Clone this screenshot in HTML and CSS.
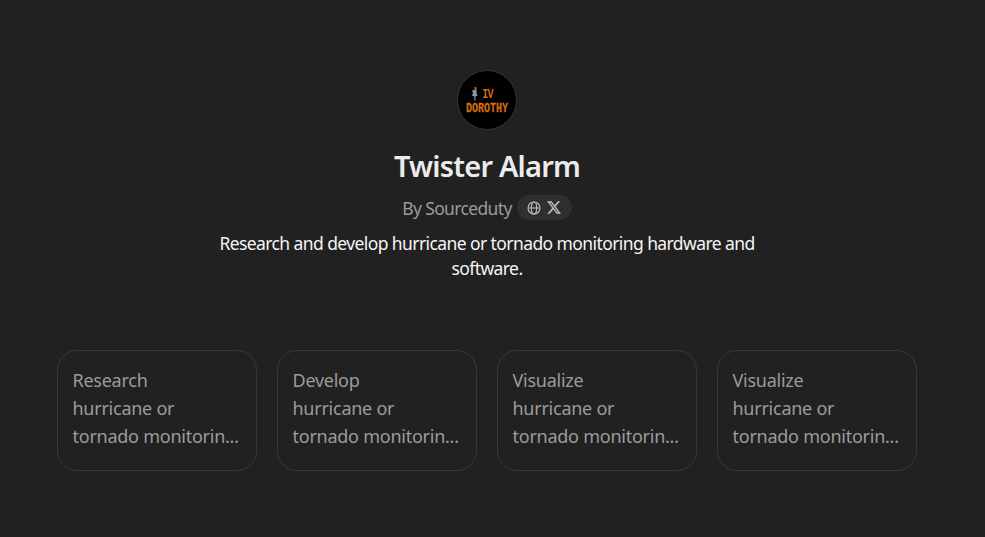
FILE: index.html
```html
<!DOCTYPE html>
<html lang="en">
<head>
<meta charset="utf-8">
<title>Twister Alarm</title>
<link rel="stylesheet" href="styles.css">
</head>
<body>
<main class="page">
  <div class="avatar">
    <div class="mark"><svg class="figure" viewBox="0 0 8 14"><path d="M3 1L5 0L6 3L4 4Z" fill="#876250"/><path d="M2 3.500L5 3L6 6H2L1 5Z" fill="#a78b80"/><path d="M2.500 5H5L6.500 9.500H1Z" fill="#789fba"/><path d="M2.500 9.500H5L4.500 14H3Z" fill="#69605b"/></svg><span class="numeral">IV</span></div>
    <span class="brand">DOROTHY</span>
  </div>
  <h1 class="title">Twister Alarm</h1>
  <div class="author"><span class="by">By Sourceduty</span>
    <div class="links">
      <svg class="globe" viewBox="0 0 14 14"><circle cx="7" cy="7" r="6"/><ellipse cx="7" cy="7" rx="2.700" ry="6"/><path d="M1 7H13"/></svg>
      <svg class="x" viewBox="1 2 22 20"><path fill-rule="evenodd" d="M18.244 2.250h3.308l-7.227 8.260 8.502 11.240H16.170l-5.214-6.817L4.990 21.750H1.680l7.730-8.835L1.254 2.250H8.080l4.713 6.231zM17.083 19.770h1.833L7.084 4.126H5.117z"/></svg>
    </div>
  </div>
  <p class="description">Research and develop hurricane or tornado monitoring hardware and<br>software.</p>
  <div class="cards">
    <button class="card">Research<br>hurricane or<br>tornado monitorin...</button>
    <button class="card">Develop<br>hurricane or<br>tornado monitorin...</button>
    <button class="card">Visualize<br>hurricane or<br>tornado monitorin...</button>
    <button class="card">Visualize<br>hurricane or<br>tornado monitorin...</button>
  </div>
</main>
</body>
</html>
```
FILE: styles.css
```css
* { box-sizing: border-box; }
body { margin: 0; background: #212121; color: #ececec; font-family: "Noto Sans", "Open Sans", sans-serif; }
.page { width: 974px; height: 537px; padding-top: 70px; display: flex; flex-direction: column; align-items: center; }
.avatar { width: 60px; height: 60px; border: 1px solid #343434; border-radius: 50%; background: #000; color: #d66d12; display: flex; flex-direction: column; align-items: center; padding-top: 15px; font: bold 10px/11px "Liberation Mono", monospace; }
.mark { display: flex; gap: 3px; height: 15px; margin-left: -10px; }
.figure { width: 8px; height: 15px; }
.numeral { line-height: 11px; height: 11px; margin-top: 3px; letter-spacing: -.8px; transform: scaleY(1.3); }
.brand { line-height: 11px; margin-top: 2px; transform: scaleY(1.35); -webkit-text-stroke: .2px #d66d12; }
.title { margin: 18px 0 0; font-size: 29px; line-height: 36px; font-weight: 600; letter-spacing: -.8px; }
.author { display: flex; gap: 5px; height: 25px; margin-top: 11px; align-items: center; color: #9b9b9b; font-size: 17.5px; line-height: 25px; }
.by { letter-spacing: -.65px; padding-top: 2px; }
.links { width: 55px; height: 25px; border-radius: 13px; background: #2f2f2f; display: flex; align-items: center; justify-content: center; gap: 6px; }
svg { display: block; fill: none; }
.globe { width: 14px; height: 14px; stroke: #bcbcbc; stroke-width: 1.1; }
.x { width: 14px; height: 13px; fill: #c0c0c0; stroke: #c0c0c0; stroke-width: .3; }
.description { margin: 11px 0 0; text-align: center; font-size: 17.5px; line-height: 25px; letter-spacing: -.59px; color: #f5f5f5; }
.cards { display: flex; gap: 20px; margin-top: 69px; }
.card { width: 200px; height: 121px; padding: 15px 14.500px 21px; border: 1px solid #383838; border-radius: 20px; background: transparent; color: #9b9b9b; font: 18px/28px "Noto Sans", "Open Sans", sans-serif; letter-spacing: -.25px; text-align: left; white-space: nowrap; }
```
